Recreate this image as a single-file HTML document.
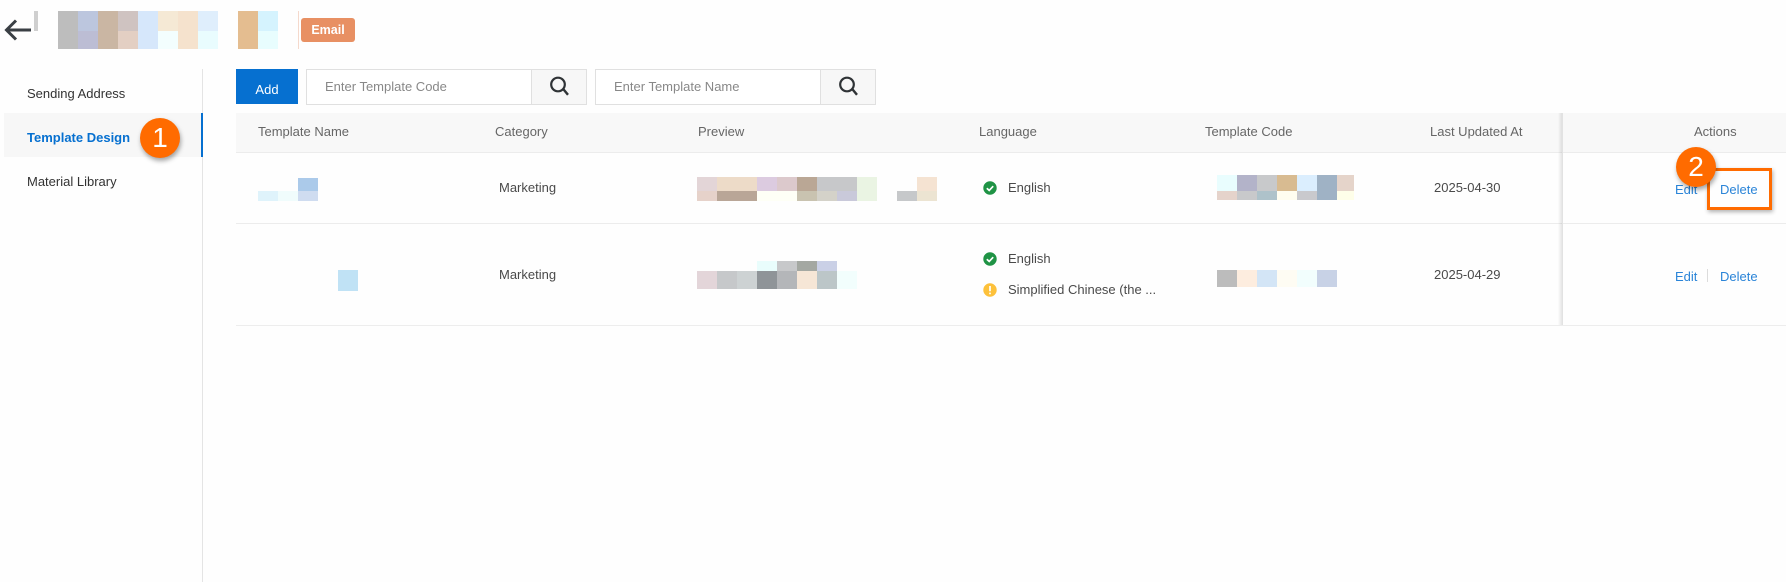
<!DOCTYPE html>
<html lang="en">
<head>
<meta charset="utf-8">
<title>Template Design</title>
<style>
html,body{margin:0;padding:0;width:1786px;height:582px;overflow:hidden;background:#fefefe}
body{position:relative;font-family:"Liberation Sans",sans-serif;font-size:13px;color:#4a4a4a}
#p{position:absolute;left:0;top:0;width:1786px;height:582px;filter:blur(.35px)}
#p div,#p span.t{position:absolute}
.t{height:20px;line-height:20px;white-space:nowrap}
.h{color:#666}
.l{color:#2a84d8}
svg{position:absolute;overflow:visible}
.b{width:40px;height:40px;border-radius:50%;background:#ff6b00;color:#fff;text-align:center;line-height:40px;font-size:28px;box-shadow:1px 3px 5px rgba(0,0,0,.35)}
</style>
</head>
<body>
<div id="p">
<!-- header -->
<svg style="left:0;top:0" width="40" height="50"><path d="M31 30H7M16 20.5L6.5 30L16 39.5" fill="none" stroke="#3a3f44" stroke-width="3"/></svg>
<div style="left:34px;top:11px;width:4px;height:20px;background:#cfcfcf"></div>
<div style="left:58px;top:11px;width:20px;height:38px;background:#bdbdbd"></div>
<div style="left:78px;top:11px;width:20px;height:20px;background:#bcc6de"></div>
<div style="left:78px;top:31px;width:20px;height:18px;background:#bcbdd4"></div>
<div style="left:98px;top:11px;width:20px;height:38px;background:#cab6a3"></div>
<div style="left:118px;top:11px;width:20px;height:20px;background:#cfc3c1"></div>
<div style="left:118px;top:31px;width:20px;height:18px;background:#e3cfc3"></div>
<div style="left:138px;top:11px;width:20px;height:38px;background:#d6e7fb"></div>
<div style="left:158px;top:11px;width:20px;height:20px;background:#f5e9d5"></div>
<div style="left:158px;top:31px;width:20px;height:18px;background:#f3fefe"></div>
<div style="left:178px;top:11px;width:20px;height:38px;background:#f5e2cd"></div>
<div style="left:198px;top:11px;width:20px;height:20px;background:#dfeefc"></div>
<div style="left:198px;top:31px;width:20px;height:18px;background:#e9fcfe"></div>
<div style="left:238px;top:11px;width:20px;height:38px;background:#e4bd90"></div>
<div style="left:258px;top:11px;width:20px;height:20px;background:#d5f3fe"></div>
<div style="left:258px;top:31px;width:20px;height:18px;background:#e8fdfe"></div>
<div style="left:298px;top:11px;width:1px;height:38px;background:#f5d9cc"></div>
<div style="left:301px;top:18px;width:54px;height:24px;border-radius:3px;background:#e89063;color:#fff;font-weight:bold;text-align:center;line-height:24px;font-size:12.5px">Email</div>

<!-- sidebar -->
<div style="left:202px;top:69px;width:1px;height:513px;background:#e4e4e4"></div>
<div style="left:4px;top:113px;width:197px;height:44px;background:#f7f7f7"></div>
<div style="left:201px;top:113px;width:2px;height:44px;background:#0670d0"></div>
<span class="t" style="left:27px;top:84px;color:#333">Sending Address</span>
<span class="t" style="left:27px;top:128px;color:#0670d0;font-weight:bold">Template Design</span>
<span class="t" style="left:27px;top:172px;color:#333">Material Library</span>
<div class="b" style="left:140px;top:118px">1</div>

<!-- toolbar -->
<div style="left:236px;top:69px;width:62px;height:35px;background:#0670d0;color:#fff;text-align:center;line-height:41px;font-size:13px">Add</div>
<div style="left:306px;top:69px;width:279px;height:34px;border:1px solid #e0e0e0;background:#fff"></div>
<div style="left:531px;top:69px;width:54px;height:34px;border:1px solid #e0e0e0;background:#f7f7f7"></div>
<span class="t" style="left:325px;top:77px;color:#888">Enter Template Code</span>
<svg style="left:549px;top:76px" width="20" height="20"><circle cx="9" cy="8.5" r="6.8" fill="none" stroke="#2f3336" stroke-width="2.2"/><path d="M14.2 13L19 18.8" stroke="#2f3336" stroke-width="2.4"/></svg>
<div style="left:595px;top:69px;width:279px;height:34px;border:1px solid #e0e0e0;background:#fff"></div>
<div style="left:820px;top:69px;width:54px;height:34px;border:1px solid #e0e0e0;background:#f7f7f7"></div>
<span class="t" style="left:614px;top:77px;color:#888">Enter Template Name</span>
<svg style="left:838px;top:76px" width="20" height="20"><circle cx="9" cy="8.5" r="6.8" fill="none" stroke="#2f3336" stroke-width="2.2"/><path d="M14.2 13L19 18.8" stroke="#2f3336" stroke-width="2.4"/></svg>

<!-- table -->
<div style="left:236px;top:113px;width:1550px;height:39px;background:#f8f8f8;border-bottom:1px solid #ececec"></div>
<div style="left:236px;top:223px;width:1550px;height:1px;background:#ececec"></div>
<div style="left:236px;top:325px;width:1550px;height:1px;background:#ededed"></div>
<span class="t h" style="left:258px;top:122px">Template Name</span>
<span class="t h" style="left:495px;top:122px">Category</span>
<span class="t h" style="left:698px;top:122px">Preview</span>
<span class="t h" style="left:979px;top:122px">Language</span>
<span class="t h" style="left:1205px;top:122px">Template Code</span>
<span class="t h" style="left:1430px;top:122px">Last Updated At</span>

<!-- sticky column -->
<div style="left:1558px;top:113px;width:4px;height:212px;background:linear-gradient(to right,rgba(0,0,0,0),rgba(0,0,0,.1))"></div>
<div style="left:1562px;top:113px;width:1px;height:212px;background:#e2e2e2"></div>
<span class="t h" style="left:1694px;top:122px">Actions</span>

<!-- row 1 name -->
<div style="left:258px;top:191px;width:20px;height:10px;background:#dff3fb"></div>
<div style="left:278px;top:191px;width:20px;height:10px;background:#f0fcfc"></div>
<div style="left:298px;top:178px;width:20px;height:13px;background:#abcaea"></div>
<div style="left:298px;top:191px;width:20px;height:10px;background:#cfdcf0"></div>
<span class="t" style="left:499px;top:178px">Marketing</span>
<!-- row 1 preview -->
<div style="left:697px;top:177px;width:20px;height:14px;background:#e3d5d7"></div>
<div style="left:717px;top:177px;width:40px;height:14px;background:#eddbc8"></div>
<div style="left:757px;top:177px;width:20px;height:14px;background:#dccbe0"></div>
<div style="left:777px;top:177px;width:20px;height:14px;background:#dcc9cc"></div>
<div style="left:797px;top:177px;width:20px;height:14px;background:#baa795"></div>
<div style="left:817px;top:177px;width:40px;height:14px;background:#c7c8ca"></div>
<div style="left:857px;top:177px;width:20px;height:24px;background:#eaf4e3"></div>
<div style="left:697px;top:191px;width:20px;height:10px;background:#e6d2ca"></div>
<div style="left:717px;top:191px;width:40px;height:10px;background:#b9a697"></div>
<div style="left:757px;top:191px;width:40px;height:10px;background:#fefff6"></div>
<div style="left:797px;top:191px;width:20px;height:10px;background:#c9c3b0"></div>
<div style="left:817px;top:191px;width:20px;height:10px;background:#d4d2c9"></div>
<div style="left:837px;top:191px;width:20px;height:10px;background:#c9c9da"></div>
<div style="left:897px;top:191px;width:20px;height:10px;background:#c6c8ca"></div>
<div style="left:917px;top:177px;width:20px;height:14px;background:#f5e3d2"></div>
<div style="left:917px;top:191px;width:20px;height:10px;background:#ece4d2"></div>
<!-- row 1 language -->
<svg style="left:983px;top:181px" width="14" height="14"><circle cx="7" cy="7" r="6.7" fill="#1f9345"/><path d="M3.8 7.2L6.2 9.4L10.2 5.2" fill="none" stroke="#fff" stroke-width="1.7"/></svg>
<span class="t" style="left:1008px;top:178px">English</span>
<!-- row 1 code -->
<div style="left:1217px;top:175px;width:20px;height:16px;background:#e9fdfe"></div>
<div style="left:1237px;top:175px;width:20px;height:16px;background:#b3b3c9"></div>
<div style="left:1257px;top:175px;width:20px;height:16px;background:#c8c9cb"></div>
<div style="left:1277px;top:175px;width:20px;height:16px;background:#d8bb91"></div>
<div style="left:1297px;top:175px;width:20px;height:16px;background:#dbeefe"></div>
<div style="left:1317px;top:175px;width:20px;height:25px;background:#9fb2c5"></div>
<div style="left:1337px;top:175px;width:17px;height:16px;background:#e5d4ca"></div>
<div style="left:1217px;top:191px;width:20px;height:9px;background:#e5d3cb"></div>
<div style="left:1237px;top:191px;width:20px;height:9px;background:#c8c9cb"></div>
<div style="left:1257px;top:191px;width:20px;height:9px;background:#aec2ca"></div>
<div style="left:1277px;top:191px;width:20px;height:9px;background:#fffdf0"></div>
<div style="left:1297px;top:191px;width:20px;height:9px;background:#c9c9cd"></div>
<div style="left:1337px;top:191px;width:17px;height:9px;background:#fefee9"></div>
<span class="t" style="left:1434px;top:178px">2025-04-30</span>
<span class="t l" style="left:1675px;top:180px">Edit</span>
<span class="t l" style="left:1720px;top:180px">Delete</span>

<!-- row 2 -->
<div style="left:338px;top:270px;width:20px;height:21px;background:#c0e2f5"></div>
<span class="t" style="left:499px;top:265px">Marketing</span>
<div style="left:757px;top:261px;width:20px;height:10px;background:#e9fdfc"></div>
<div style="left:777px;top:261px;width:20px;height:10px;background:#c7c8ca"></div>
<div style="left:797px;top:261px;width:20px;height:10px;background:#a4a8a2"></div>
<div style="left:817px;top:261px;width:20px;height:10px;background:#cad0e6"></div>
<div style="left:697px;top:271px;width:20px;height:18px;background:#e3d5d9"></div>
<div style="left:717px;top:271px;width:20px;height:18px;background:#c6c8ca"></div>
<div style="left:737px;top:271px;width:20px;height:18px;background:#cdd2d3"></div>
<div style="left:757px;top:271px;width:20px;height:18px;background:#8f9498"></div>
<div style="left:777px;top:271px;width:20px;height:18px;background:#b4b6b9"></div>
<div style="left:797px;top:271px;width:20px;height:18px;background:#f6e6d6"></div>
<div style="left:817px;top:271px;width:20px;height:18px;background:#bcc6c8"></div>
<div style="left:837px;top:271px;width:20px;height:18px;background:#f2fefd"></div>
<svg style="left:983px;top:252px" width="14" height="14"><circle cx="7" cy="7" r="6.7" fill="#1f9345"/><path d="M3.8 7.2L6.2 9.4L10.2 5.2" fill="none" stroke="#fff" stroke-width="1.7"/></svg>
<span class="t" style="left:1008px;top:249px">English</span>
<svg style="left:983px;top:283px" width="14" height="14"><circle cx="7" cy="7" r="6.7" fill="#fdc13b"/><path d="M7 3v5.2M7 9.6v1.6" fill="none" stroke="#fff" stroke-width="1.7"/></svg>
<span class="t" style="left:1008px;top:280px">Simplified Chinese (the ...</span>
<div style="left:1217px;top:270px;width:20px;height:17px;background:#bcbcbc"></div>
<div style="left:1237px;top:270px;width:20px;height:17px;background:#fdeddf"></div>
<div style="left:1257px;top:270px;width:20px;height:17px;background:#d3e5f6"></div>
<div style="left:1277px;top:270px;width:20px;height:17px;background:#fefcf3"></div>
<div style="left:1297px;top:270px;width:20px;height:17px;background:#f2fefd"></div>
<div style="left:1317px;top:270px;width:20px;height:17px;background:#c8d2e6"></div>
<span class="t" style="left:1434px;top:265px">2025-04-29</span>
<span class="t l" style="left:1675px;top:267px">Edit</span>
<div style="left:1707px;top:269px;width:1px;height:13px;background:#dcdcdc"></div>
<span class="t l" style="left:1720px;top:267px">Delete</span>

<!-- annotations -->
<div style="left:1707px;top:168px;width:59px;height:36px;border:3px solid #ff6b00;box-shadow:1px 2px 4px rgba(0,0,0,.3)"></div>
<div class="b" style="left:1676px;top:147px">2</div>
</div>
</body>
</html>
